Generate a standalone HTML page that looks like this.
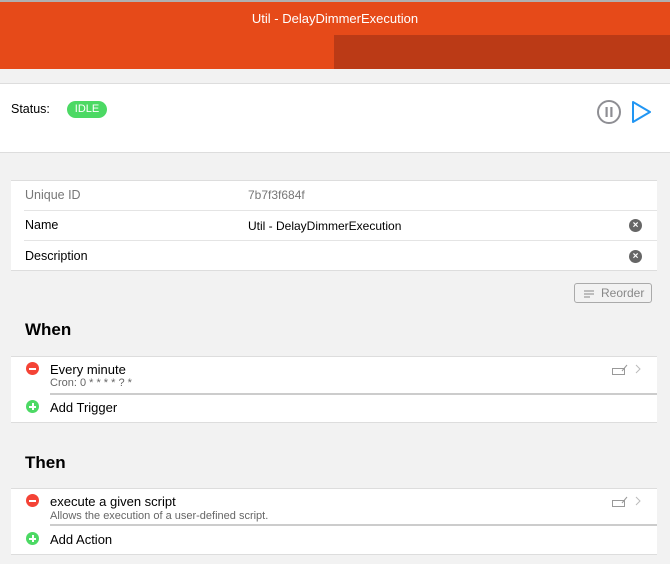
<!DOCTYPE html>
<html><head><style>
*{margin:0;padding:0;box-sizing:border-box}
body{width:670px;height:564px;background:#f2f2f2;font-family:"Liberation Sans",sans-serif;position:relative;overflow:hidden;color:#000}
.a{position:absolute}
.t{font-size:12.5px;white-space:nowrap}
.row{position:absolute;left:11px;width:646px;background:#fff}
.circ{position:absolute;width:13px;height:13px;border-radius:50%}
.circ:before{content:"";position:absolute;left:3px;top:5.5px;width:7px;height:2px;background:#fff}
.plus:after{content:"";position:absolute;left:5.5px;top:3px;width:2px;height:7px;background:#fff}
.x{position:absolute;width:13px;height:13px;border-radius:50%;background:#666;color:#fff;font-size:10px;line-height:13px;text-align:center;font-weight:bold}
</style></head><body>
<div class="a" style="left:0;top:0;width:670px;height:2px;background:#b0b0b0"></div>
<div class="a" style="left:0;top:2px;width:670px;height:67px;background:#e64a19"></div>
<div class="a" style="left:334px;top:35px;width:336px;height:34px;background:#bb3a16"></div>
<div class="a t" style="left:0;width:670px;top:11px;text-align:center;color:#fff;font-size:13px">Util - DelayDimmerExecution</div>

<div class="a" style="left:0;top:83px;width:670px;height:70px;background:#fff;border-top:1px solid #ddd;border-bottom:1px solid #ddd"></div>
<div class="a t" style="left:11px;top:102px">Status:</div>
<div class="a" style="left:67px;top:101px;width:40px;height:17px;border-radius:9px;background:#4cd964;color:#fff;font-size:11px;text-align:center;line-height:17px">IDLE</div>
<svg class="a" style="left:596px;top:99px" width="26" height="26"><circle cx="13" cy="13" r="11" fill="none" stroke="#8e8e93" stroke-width="2"/><rect x="9.5" y="8" width="2.2" height="10" fill="#8e8e93"/><rect x="14.3" y="8" width="2.2" height="10" fill="#8e8e93"/></svg>
<svg class="a" style="left:631px;top:100px" width="22" height="24"><path d="M2 2 L19 12 L2 22 Z" fill="none" stroke="#2196f3" stroke-width="2" stroke-linejoin="round"/></svg>

<div class="row" style="top:180px;height:91px;border-top:1px solid #ddd;border-bottom:1px solid #ddd"></div>
<div class="a" style="left:24px;top:210px;width:633px;height:1px;background:#e4e4e4"></div>
<div class="a" style="left:24px;top:240px;width:633px;height:1px;background:#e4e4e4"></div>
<div class="a t" style="left:25px;top:188px;color:#777">Unique ID</div>
<div class="a t" style="left:248px;top:188px;color:#777;font-size:12px">7b7f3f684f</div>
<div class="a t" style="left:25px;top:218px">Name</div>
<div class="a t" style="left:248px;top:219px;font-size:12px">Util - DelayDimmerExecution</div>
<div class="x" style="left:629px;top:219px">×</div>
<div class="a t" style="left:25px;top:249px">Description</div>
<div class="x" style="left:629px;top:250px">×</div>

<div class="a" style="left:574px;top:283px;width:78px;height:20px;border:1px solid #aaa;border-radius:3px;color:#888;font-size:12px;line-height:18px;padding-left:26px">Reorder</div>
<svg class="a" style="left:584px;top:289px" width="11" height="10"><path d="M0 2H10M0 5H10M0 8H6" stroke="#888" stroke-width="1"/></svg>

<div class="a" style="left:25px;top:320px;font-size:17px;font-weight:bold">When</div>
<div class="row" style="top:356px;height:67px;border-top:1px solid #ddd;border-bottom:1px solid #ddd"></div>
<div class="a" style="left:50px;top:393px;width:607px;height:2px;background:#ccc"></div>
<div class="circ" style="left:26px;top:362px;background:#f44336"></div>
<div class="a t" style="left:50px;top:362px;font-size:13px">Every minute</div>
<div class="a t" style="left:50px;top:377px;font-size:11px;color:#666">Cron: 0 * * * * ? *</div>
<svg class="a" style="left:612px;top:363px" width="32" height="14"><rect x="0.5" y="5.5" width="12" height="6" fill="none" stroke="#999"/><path d="M10 8 L15 2" stroke="#999"/><path d="M24 2 L28 6 L24 10" fill="none" stroke="#bbb"/></svg>
<div class="circ plus" style="left:26px;top:400px;background:#4cd964"></div>
<div class="a t" style="left:50px;top:400px;font-size:13px">Add Trigger</div>

<div class="a" style="left:25px;top:453px;font-size:17px;font-weight:bold">Then</div>
<div class="row" style="top:488px;height:67px;border-top:1px solid #ddd;border-bottom:1px solid #ddd"></div>
<div class="a" style="left:50px;top:524px;width:607px;height:2px;background:#ccc"></div>
<div class="circ" style="left:26px;top:494px;background:#f44336"></div>
<div class="a t" style="left:50px;top:494px;font-size:13px">execute a given script</div>
<div class="a t" style="left:50px;top:510px;font-size:11px;color:#666">Allows the execution of a user-defined script.</div>
<svg class="a" style="left:612px;top:495px" width="32" height="14"><rect x="0.5" y="5.5" width="12" height="6" fill="none" stroke="#999"/><path d="M10 8 L15 2" stroke="#999"/><path d="M24 2 L28 6 L24 10" fill="none" stroke="#bbb"/></svg>
<div class="circ plus" style="left:26px;top:532px;background:#4cd964"></div>
<div class="a t" style="left:50px;top:532px;font-size:13px">Add Action</div>
</body></html>
